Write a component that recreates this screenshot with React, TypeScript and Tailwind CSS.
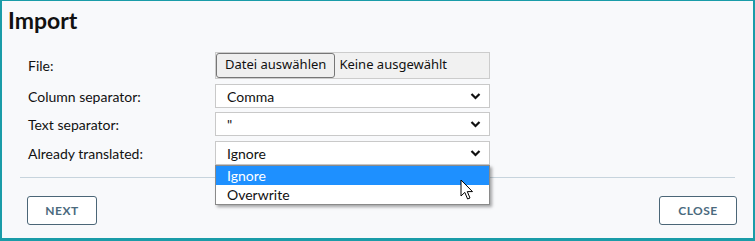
import React from "react";

const rows = [
  { label: "Column separator:", value: "Comma" },
  { label: "Text separator:", value: '"' },
];

function Chevron() {
  return (
    <svg width="11" height="8" viewBox="0 0 11 8" className="shrink-0">
      <path d="M1.5 2 L5.5 6 L9.5 2" fill="none" stroke="#111" strokeWidth="2.2" />
    </svg>
  );
}

function Select({ value }: { value: string }) {
  return (
    <div className="flex h-[24px] w-[275px] items-center justify-between border border-[#c9c9c9] bg-white pl-[11px] pr-[8px] text-[14px] text-[#111]">
      <span>{value}</span>
      <Chevron />
    </div>
  );
}

export default function App() {
  return (
    <div
      className="relative h-[241px] w-[755px] overflow-hidden border-t border-l-2 border-r-2 border-b-[3px] border-[#1a9ca8] bg-[#f8f9fb] text-[#111]"
      style={{ fontFamily: "Lato, 'Noto Sans', sans-serif" }}
    >
      <h1 className="pl-[6px] pt-[5px] text-[23px] font-bold leading-[28px]">Import</h1>

      <div className="mt-[18px] flex flex-col pl-[26px]">
        <div className="flex h-[26px] items-center">
          <span className="w-[187px] text-[14px]">File:</span>
          <div
            className="flex h-[27px] w-[275px] items-center border border-[#cccccc] bg-[#f1f1f1] text-[13px]"
            style={{ fontFamily: "'Noto Sans', 'Open Sans', sans-serif" }}
          >
            <div className="flex h-[25px] items-center rounded-[3px] border border-[#767676] bg-[#efefef] px-[8px]">
              Datei auswählen
            </div>
            <span className="pl-[4px]">Keine ausgewählt</span>
          </div>
        </div>

        {rows.map((r, i) => (
          <div key={r.label} className={`flex items-center ${i === 0 ? "mt-[6px]" : "mt-[4px]"}`}>
            <span className="w-[187px] text-[14px]">{r.label}</span>
            <Select value={r.value} />
          </div>
        ))}

        <div className="relative z-10 mt-[5px] flex items-center">
          <span className="w-[187px] text-[14px]">Already translated:</span>
          <div className="relative">
            <Select value="Ignore" />
            <div className="absolute left-0 top-[24px] w-[275px] border border-[#8a8a8a] bg-white text-[14px] shadow-[2px_2px_3px_rgba(0,0,0,0.35)]">
              <div className="flex h-[19px] items-center bg-[#1e90ff] pl-[11px] text-white">Ignore</div>
              <div className="flex h-[19px] items-center pl-[11px]">Overwrite</div>
            </div>
            <svg
              width="14"
              height="22"
              viewBox="0 0 14 22"
              className="absolute left-[245px] top-[38px]"
            >
              <path
                d="M1 1 L1 17 L4.8 13.4 L7.6 20 L10 19 L7.3 12.6 L12.5 12.6 Z"
                fill="#fff"
                stroke="#000"
                strokeWidth="1"
                strokeLinejoin="round"
              />
            </svg>
          </div>
        </div>
      </div>

      <div className="mx-[18px] mt-[12px] h-px bg-[#c7d4dd]" />

      <div className="mt-[18px] flex justify-between pl-[25px] pr-[16px]">
        <button className="h-[29px] w-[70px] rounded-[3px] border border-[#4b6677] bg-white text-[12px] font-bold tracking-[0.5px] text-[#4b6a7e]">
          NEXT
        </button>
        <button className="h-[29px] w-[78px] rounded-[3px] border border-[#4b6677] bg-white text-[12px] font-bold tracking-[0.5px] text-[#4b6a7e]">
          CLOSE
        </button>
      </div>
    </div>
  );
}
